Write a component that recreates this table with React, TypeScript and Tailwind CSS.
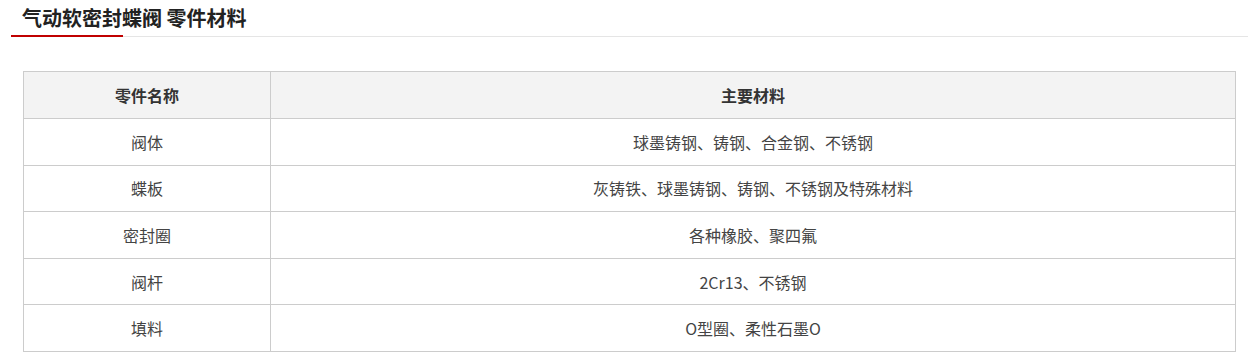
const rows: [string, string][] = [
  ['阀体', '球墨铸钢、铸钢、合金钢、不锈钢'],
  ['蝶板', '灰铸铁、球墨铸钢、铸钢、不锈钢及特殊材料'],
  ['密封圈', '各种橡胶、聚四氟'],
  ['阀杆', '2Cr13、不锈钢'],
  ['填料', 'O型圈、柔性石墨O'],
];

export default function App() {
  return (
    <div className="w-[1258px] h-[363px] bg-white font-['Microsoft_YaHei','Noto_Sans_CJK_SC',sans-serif] text-[#333]">
      {/* section title */}
      <div className="ml-[11px] mr-[10px] border-b border-[#e5e5e5]">
        <h2 className="h-[35px] pl-[11px] text-[20px] leading-[35px] font-bold text-[#222]">
          气动软密封蝶阀 零件材料
        </h2>
        <div className="w-[112px] h-[2px] bg-[#c00000] -mb-px" />
      </div>

      <div className="ml-[23px] mt-[34px] w-[1213px]">
        <table className="w-full border-collapse text-[16px] text-center">
          <thead>
            <tr className="bg-[#f3f3f3] h-[47px]">
              <th className="w-[247px] border border-[#cccccc] font-bold">零件名称</th>
              <th className="border border-[#cccccc] font-bold">主要材料</th>
            </tr>
          </thead>
          <tbody>
            {rows.map(([part, material], i) => (
              <tr key={i} className="h-[46.6px]">
                <td className="border border-[#cccccc] text-[#444]">{part}</td>
                <td className="border border-[#cccccc] text-[#444]">{material}</td>
              </tr>
            ))}
          </tbody>
        </table>
      </div>
    </div>
  );
}
